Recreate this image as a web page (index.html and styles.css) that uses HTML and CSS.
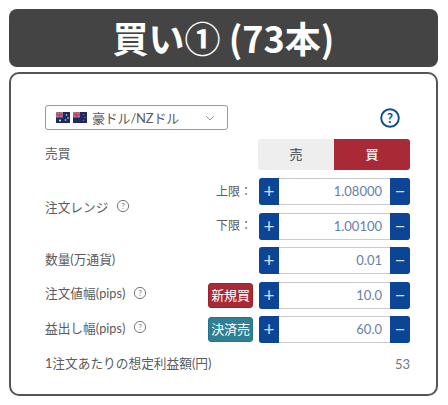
FILE: index.html
```html
<!DOCTYPE html>
<html lang="ja">
  <head>
    <meta charset="UTF-8" />
    <title>買い①</title>
    <link rel="stylesheet" href="styles.css">
  </head>
  <body>
    <h1 class="title">買い① (73本)</h1>
    <div class="card">
      <div class="top-row">
        <div class="select">
          <svg class="flag" viewBox="0 0 14 11"><rect width="14" height="11" fill="#1c2a63"/><rect width="7" height="5.5" fill="#8d8098"/><path d="M3.5 0v5.5M0 2.75h7" stroke="#c8424f" stroke-width="1.4"/><circle cx="10.5" cy="3" r=".8" fill="#ddd"/><circle cx="12" cy="6" r=".8" fill="#ddd"/><circle cx="9.5" cy="8" r=".8" fill="#ddd"/><circle cx="4" cy="8.5" r="1" fill="#eee"/></svg>
          <svg class="flag" viewBox="0 0 14 11"><rect width="14" height="11" fill="#1c2a63"/><rect width="7" height="5.5" fill="#8d8098"/><path d="M3.5 0v5.5M0 2.75h7" stroke="#c8424f" stroke-width="1.4"/><circle cx="10.5" cy="2.5" r=".8" fill="#c8424f"/><circle cx="12" cy="5.5" r=".8" fill="#c8424f"/><circle cx="10.5" cy="8.5" r=".8" fill="#c8424f"/></svg>
          <span class="pair">豪ドル/NZドル</span>
          <svg class="chevron" viewBox="0 0 10 6"><path d="M1 1l4 4 4-4" fill="none" stroke="#999" stroke-width="1"/></svg>
        </div>
        <svg class="help" viewBox="0 0 20 20"><circle cx="10" cy="10" r="8.8" fill="none" stroke="#0f4a8a" stroke-width="1.9"/><text x="10" y="14.6" text-anchor="middle" class="help-mark">?</text></svg>
      </div>

      <div class="row toggle-row">
        <span class="label">売買</span>
        <div class="toggle">
          <div class="sell">売</div>
          <div class="buy">買</div>
        </div>
      </div>

      <div class="range">
        <span class="label">注文レンジ<svg class="tip" viewBox="0 0 14 14"><circle cx="7" cy="7" r="5.6" fill="none" stroke="#777" stroke-width="1"/><text x="7" y="10" text-anchor="middle" class="tip-mark">?</text></svg></span>
        <div class="range-rows">
          <div class="range-row">
            <span class="limit">上限：</span>
            <div class="stepper"><div class="btn">+</div><div class="value">1.08000</div><div class="btn">−</div></div>
          </div>
          <div class="range-row">
            <span class="limit">下限：</span>
            <div class="stepper"><div class="btn">+</div><div class="value">1.00100</div><div class="btn">−</div></div>
          </div>
        </div>
      </div>

      <div class="row step-row">
        <span class="label">数量(万通貨)</span>
        <div class="stepper"><div class="btn">+</div><div class="value">0.01</div><div class="btn">−</div></div>
      </div>

      <div class="row step-row">
        <span class="label">注文値幅(pips)<svg class="tip" viewBox="0 0 14 14"><circle cx="7" cy="7" r="5.6" fill="none" stroke="#777" stroke-width="1"/><text x="7" y="10" text-anchor="middle" class="tip-mark">?</text></svg></span>
        <span class="badge badge-new">新規買</span>
        <div class="stepper"><div class="btn">+</div><div class="value">10.0</div><div class="btn">−</div></div>
      </div>

      <div class="row step-row">
        <span class="label">益出し幅(pips)<svg class="tip" viewBox="0 0 14 14"><circle cx="7" cy="7" r="5.6" fill="none" stroke="#777" stroke-width="1"/><text x="7" y="10" text-anchor="middle" class="tip-mark">?</text></svg></span>
        <span class="badge badge-close">決済売</span>
        <div class="stepper"><div class="btn">+</div><div class="value">60.0</div><div class="btn">−</div></div>
      </div>

      <div class="row profit">
        <span class="label">1注文あたりの想定利益額(円)</span>
        <span class="profit-value">53</span>
      </div>
    </div>
  </body>
</html>
```

FILE: styles.css
```css
body {
  margin: 0;
  padding: 9px 10px 9px 9px;
  background-color: #fff;
  font-family: "Lato", "Noto Sans CJK JP", sans-serif;
  color: #5c5c5c;
  font-size: 12.7px;
}

.title {
  margin: 0;
  height: 58px;
  line-height: 56px;
  text-align: center;
  background-color: #444;
  border-radius: 8px;
  color: #fff;
  font-family: "Noto Sans CJK JP", sans-serif;
  font-size: 36px;
  font-weight: 700;
}

.card {
  box-sizing: border-box;
  height: 324px;
  margin-top: 5px;
  padding: 31px 26px 0 34px;
  border: 2px solid #555;
  border-radius: 10px;
}

.top-row {
  display: flex;
  justify-content: space-between;
  align-items: center;
  height: 25px;
}

.select {
  box-sizing: border-box;
  display: flex;
  align-items: center;
  width: 183px;
  height: 25px;
  padding: 0 10px;
  border: 1px solid #999;
  border-radius: 3px;
}

.flag {
  width: 14px;
  height: 11px;
  margin-right: 3px;
}

.pair {
  margin-left: 2px;
  font-size: 13px;
  letter-spacing: -0.2px;
  flex: 1;
}

.chevron {
  width: 10px;
  height: 6px;
  margin-right: 2px;
}

.help {
  width: 20px;
  height: 20px;
  margin-right: 10px;
}

.help-mark {
  font-size: 13px;
  font-weight: 700;
  fill: #0f4a8a;
  font-family: "Lato", sans-serif;
}

.row {
  display: flex;
  align-items: center;
}

.row .label {
  margin-right: auto;
}

.label {
  display: flex;
  align-items: center;
  gap: 8px;
  padding-bottom: 5px;
  white-space: pre;
}

.tip {
  width: 14px;
  height: 14px;
}

.tip-mark {
  font-size: 8px;
  fill: #777;
}

.toggle-row {
  margin-top: 9px;
}

.toggle {
  display: flex;
  width: 152px;
  height: 31px;
  font-size: 13px;
  line-height: 30px;
  text-align: center;
  font-weight: 500;
}

.sell {
  flex: 1;
  background-color: #eee;
  border-radius: 3px 0 0 3px;
}

.buy {
  flex: 1;
  background-color: #a92a36;
  color: #fff;
  border-radius: 0 3px 3px 0;
}

.range {
  display: flex;
  justify-content: space-between;
  align-items: center;
  margin-top: 8px;
}

.range-rows {
  display: flex;
  flex-direction: column;
  gap: 7.5px;
}

.range-row {
  display: flex;
  align-items: center;
  gap: 7px;
}

.limit {
  padding-bottom: 3px;
  font-size: 12px;
}

.stepper {
  display: flex;
  width: 151px;
  height: 27px;
  border-radius: 3px;
  overflow: hidden;
  box-shadow: inset 0 0 0 1px #ccc;
}

.btn {
  width: 20px;
  background-color: #0c4595;
  color: #d3dcea;
  font-size: 19px;
  line-height: 25px;
  text-align: center;
}

.value {
  flex: 1;
  padding-right: 8px;
  color: #6680a8;
  font-size: 13px;
  line-height: 26px;
  text-align: right;
}

.step-row {
  margin-top: 7.5px;
}

.badge {
  box-sizing: border-box;
  width: 45px;
  height: 25px;
  margin-right: 6px;
  border: 1px solid #98222d;
  border-radius: 3px;
  color: #fff;
  font-size: 13px;
  line-height: 22px;
  text-align: center;
  letter-spacing: -0.2px;
}

.badge-new {
  background-color: #a92a36;
}

.badge-close {
  border-color: #2a7287;
  background-color: #2f7f96;
}

.profit {
  justify-content: space-between;
  align-items: flex-start;
  margin-top: 10px;
}

.profit-value {
  margin-top: 3px;
  color: #777;
  font-size: 13px;
}
```
